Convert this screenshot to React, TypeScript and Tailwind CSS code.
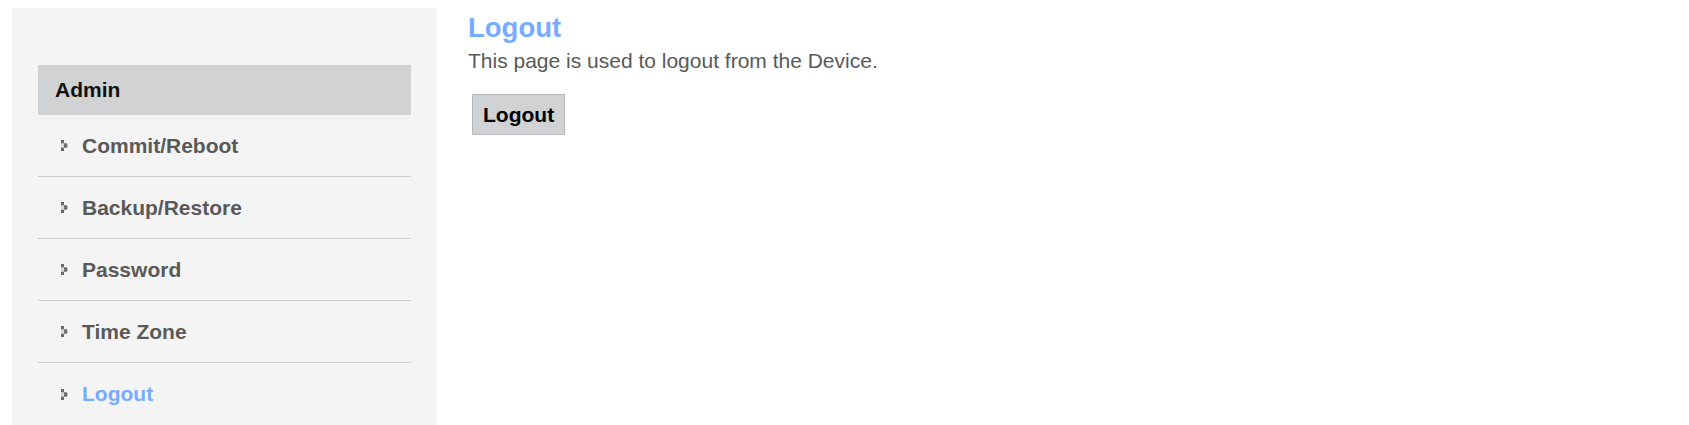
import React from "react";

function Bullet() {
  return (
    <svg width="7" height="11" viewBox="0 0 7 11" className="shrink-0" shapeRendering="crispEdges">
      <rect x="0" y="0" width="3" height="3" fill="#6a6a6a" />
      <rect x="0" y="3" width="3" height="1" fill="#bdbdbd" />
      <rect x="0" y="4" width="3" height="3" fill="#d8d8d8" />
      <rect x="0" y="7" width="3" height="1" fill="#bdbdbd" />
      <rect x="0" y="8" width="3" height="3" fill="#6a6a6a" />
      <rect x="3" y="3" width="3" height="5" fill="#8c8c8c" />
      <rect x="3" y="4" width="3" height="3" fill="#6f6f6f" />
      <rect x="6" y="4" width="1" height="3" fill="#c0c0c0" />
    </svg>
  );
}

const items = ["Commit/Reboot", "Backup/Restore", "Password", "Time Zone", "Logout"];

export default function App() {
  return (
    <div
      className="flex bg-white pl-[12px] pt-[8px] h-[425px] overflow-hidden"
      style={{ fontFamily: '"Liberation Sans", Arial, sans-serif' }}
    >
      <div className="w-[425px] shrink-0 bg-[#f4f4f4] pt-[57px] px-[26px] h-[430px]">
        <div className="h-[50px] bg-[#d1d2d4] flex items-center pl-[17px] text-[21px] font-bold text-[#111]">
          Admin
        </div>
        {items.map((label, i) => (
          <div
            key={label}
            className={
              i < items.length - 1
                ? "h-[62px] flex items-center pl-[23px] border-b border-[#cccccc]"
                : "h-[62px] flex items-center pl-[23px]"
            }
          >
            <Bullet />
            <span
              className={
                label === "Logout"
                  ? "ml-[14px] text-[21px] font-bold text-[#76abff]"
                  : "ml-[14px] text-[21px] font-bold text-[#595959]"
              }
            >
              {label}
            </span>
          </div>
        ))}
      </div>
      <div className="ml-[31px] pt-[4px] flex flex-col items-start">
        <h1 className="text-[27.5px] leading-[31px] font-bold text-[#76abff]">Logout</h1>
        <p className="mt-[6px] text-[21px] leading-[24px] text-[#595959]">
          This page is used to logout from the Device.
        </p>
        <button className="mt-[21px] ml-[4px] h-[41px] px-[10px] bg-[#d1d2d4] border border-[#b8b8b8] text-[21px] font-bold text-black leading-[24px]">
          Logout
        </button>
      </div>
    </div>
  );
}
